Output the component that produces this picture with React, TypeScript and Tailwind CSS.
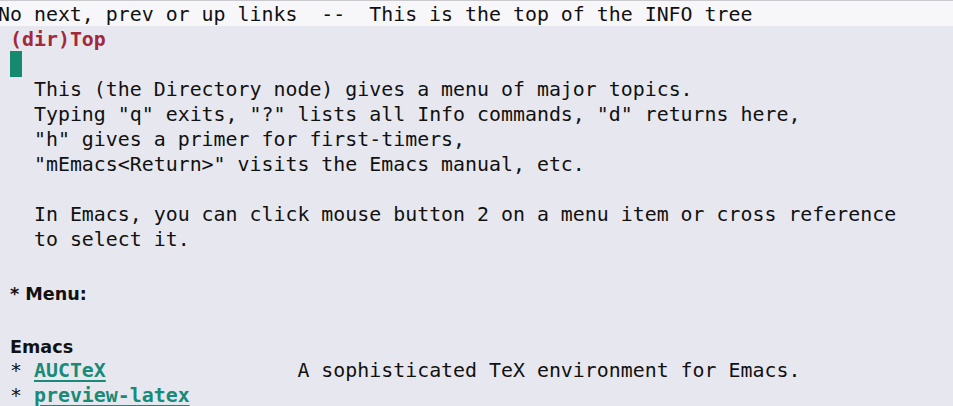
import React from "react";

const mono = { fontFamily: '"DejaVu Sans Mono", monospace' };

function Row({ children }: { children?: React.ReactNode }) {
  return (
    <div className="h-[25px] leading-[28px] whitespace-pre text-[19.9px] text-[#111111]">
      {children ?? " "}
    </div>
  );
}

function Heading({ children }: { children: React.ReactNode }) {
  return (
    <div
      className="h-[28px] leading-[36px] whitespace-pre text-[17.6px] font-bold text-[#111111]"
      style={{ fontFamily: '"DejaVu Sans", sans-serif' }}
    >
      {children}
    </div>
  );
}

export default function App() {
  return (
    <div
      className="w-[953px] h-[406px] overflow-hidden bg-[#e7e8ef]"
      style={mono}
    >
      <div className="h-[26px] border-t border-[#c9c9ce] bg-[#f7f7f9] text-[19.9px] leading-[28px] whitespace-pre text-[#111111] -ml-[2px]">
        No next, prev or up links  --  This is the top of the INFO tree
      </div>
      <div className="pl-[10px]">
        <Row>
          <span className="font-bold text-[#a3283a]">(dir)Top</span>
        </Row>
        <div className="h-[25px] flex items-start">
          <div className="w-[12px] h-[26px] bg-[#168a6e]" />
        </div>
        <Row>  This (the Directory node) gives a menu of major topics.</Row>
        <Row>  Typing "q" exits, "?" lists all Info commands, "d" returns here,</Row>
        <Row>  "h" gives a primer for first-timers,</Row>
        <Row>  "mEmacs&lt;Return&gt;" visits the Emacs manual, etc.</Row>
        <Row />
        <Row>  In Emacs, you can click mouse button 2 on a menu item or cross reference</Row>
        <Row>  to select it.</Row>
        <Row />
        <Heading>* Menu:</Heading>
        <Row />
        <Heading>Emacs</Heading>
        <Row>
          {"* "}
          <span className="font-bold text-[#1a8a78] underline underline-offset-[3px] decoration-[1.5px]">AUCTeX</span>
          {"                A sophisticated TeX environment for Emacs."}
        </Row>
        <Row>
          {"* "}
          <span className="font-bold text-[#1a8a78] underline underline-offset-[3px] decoration-[1.5px]">preview-latex</span>
        </Row>
      </div>
    </div>
  );
}
